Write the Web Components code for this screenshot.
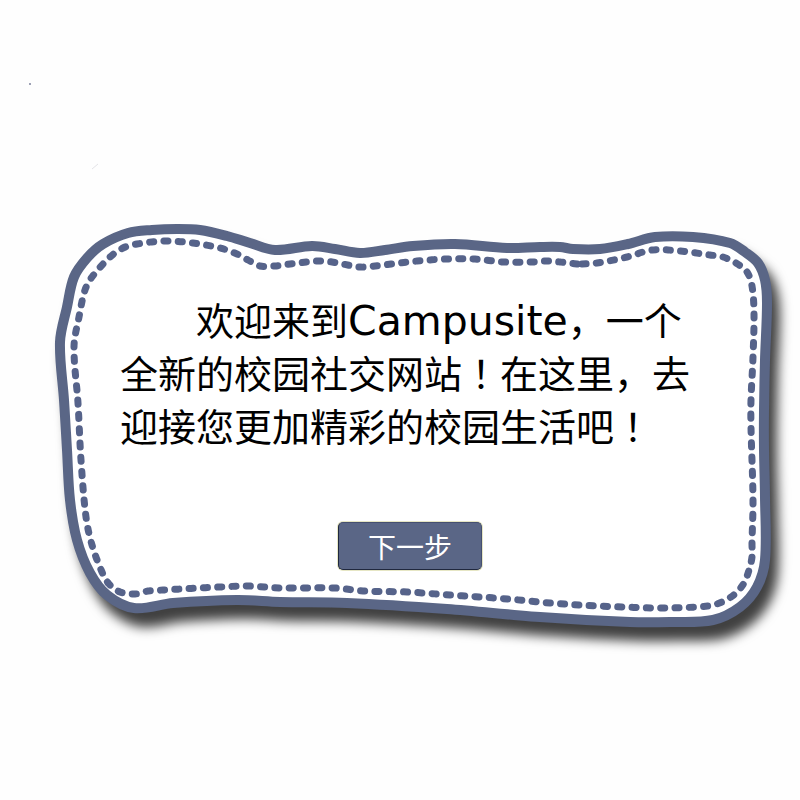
<!DOCTYPE html>
<html lang="zh-CN">
<head>
<meta charset="utf-8">
<meta name="viewport" content="width=device-width, initial-scale=1">
<title>Campusite</title>
<style>
  body { margin: 0; background: #fefefe; font-family: "Noto Sans CJK SC", sans-serif; }
</style>
</head>
<body>
<welcome-page>
  <stitched-card>
    <welcome-text>欢迎来到<latin-name>Campusite</latin-name>，一个全新的校园社交网站<centred-mark>！</centred-mark>在这里，去迎接您更加精彩的校园生活吧<centred-mark>！</centred-mark></welcome-text>
    <next-button slot="action">下一步</next-button>
  </stitched-card>
</welcome-page>
<script>
// Smooth curve through a list of points, as cubic Béziers.
function smooth(points, closed) {
  const n = points.length;
  const at = i => closed ? points[(i + n) % n] : points[Math.max(0, Math.min(n - 1, i))];
  const gap = (p, q) => Math.hypot(q[0] - p[0], q[1] - p[1]);
  let d = `M${points[0]}`;
  for (let i = 0; i < (closed ? n : n - 1); i++) {
    const [a, b, c, e] = [at(i - 1), at(i), at(i + 1), at(i + 2)];
    const t = gap(b, c) / gap(a, c) / 3;
    const u = gap(b, c) / gap(b, e) / 3;
    d += `C${b[0] + (c[0] - a[0]) * t},${b[1] + (c[1] - a[1]) * t} ${c[0] - (e[0] - b[0]) * u},${c[1] - (e[1] - b[1]) * u} ${c}`;
  }
  return closed ? d + "Z" : d;
}

const OUTLINE = [[128,233],[152,230],[177,229],[200,230],[227,236],[250,243],[275,250],[312,246],[335,249],[360,253],
  [385,250],[413,246],[455,244],[507,248],[540,247],[560,247],[573,249],[600,249],[628,244],[655,237],[693,237],[730,243],[745,252],
  [758,263],[765,280],[767,303],[765,360],[764,410],[764,450],[765,497],[765,560],[757,587],[740,607],[713,620],[670,622],
  [630,622],[540,617],[447,609],[347,603],[280,602],[237,600],[173,603],[134,608],[107,595],[90,573],[77,540],[70,500],
  [67,450],[64,400],[60,342],[67,307],[74,277],[87,258],[103,244]];

const STITCH = [[582,264],[597,263],[627,257],[652,250],[680,251],[710,255],[723,257],[736,263],[747,272],[752,286],[754,313],
  [753,357],[751,400],[751,427],[753,500],[752,543],[752,557],[749,570],[744,583],[735,594],[722,602],[708,606],[665,608],
  [623,607],[579,605],[550,603],[508,599],[450,595],[407,592],[363,591],[335,588],[280,588],[248,586],[220,587],[163,590],
  [148,591],[135,594],[120,592],[109,584],[102,572],[92,545],[86,517],[81,460],[78,403],[74,347],[79,317],[85,290],[92,277],
  [110,257],[123,248],[137,244],[165,241],[193,243],[220,248],[237,254],[248,260],[260,266],[275,266],[290,264],[318,261],
  [332,262],[360,267],[375,266],[417,261],[447,259],[475,259],[503,262],[532,262],[547,261],[560,262],[577,264]];

customElements.define("welcome-page", class extends HTMLElement {
  constructor() {
    super();
    this.attachShadow({ mode: "open" }).innerHTML = `
      <style>
        :host { display: block; position: relative; box-sizing: border-box; min-height: 100vh; padding: 224px 28px 64px 56px; }
        svg { position: absolute; top: 80px; left: 28px; }
      </style>
      <svg width="72" height="96" aria-hidden="true">
        <circle cx="2" cy="4" r="1" fill="#7d829c"/>
        <path d="M64 89l6-5" stroke="#e4e4e8" fill="none"/>
      </svg>
      <slot></slot>`;
  }
});

customElements.define("stitched-card", class extends HTMLElement {
  constructor() {
    super();
    this.attachShadow({ mode: "open" }).innerHTML = `
      <style>
        :host { display: flex; flex-direction: column; align-items: center; gap: 71px; position: relative;
          box-sizing: border-box; padding: 68px 72px 58px 64px; }
        svg { position: absolute; inset: 0; width: 100%; height: 100%; overflow: visible; z-index: -1; fill: none; }
        .edge { fill: #fff; stroke: #5a6686; stroke-width: 10; stroke-linejoin: round;
          filter: drop-shadow(8px 14px 6px rgba(0, 0, 0, .75)); }
        .stitch { stroke: #56638a; stroke-width: 7; stroke-linecap: round; stroke-dasharray: 4 10; }
      </style>
      <svg viewBox="56 224 716 404" preserveAspectRatio="none" aria-hidden="true">
        <path class="edge" d="${smooth(OUTLINE, true)}"/>
        <path class="stitch" d="${smooth(STITCH, false)}"/>
      </svg>
      <slot></slot>
      <slot name="action"></slot>`;
    // A whole number of stitches, so that the seam ends on a full one.
    const stitch = this.shadowRoot.querySelector(".stitch");
    const count = Math.round(stitch.getTotalLength() / 14.35);
    stitch.setAttribute("pathLength", count * 14 + 4);
  }
});

customElements.define("welcome-text", class extends HTMLElement {
  constructor() {
    super();
    this.attachShadow({ mode: "open" }).innerHTML = `
      <style>
        :host { display: block; width: 100%; color: #000; }
        p { margin: 0; font-size: 38px; line-height: 53px; text-indent: 2em; }
      </style>
      <p><slot></slot></p>`;
  }
});

// Inline elements: no white space in the shadow root, since it would be drawn as a gap in the line.
customElements.define("latin-name", class extends HTMLElement {
  constructor() {
    super();
    this.attachShadow({ mode: "open" }).innerHTML =
      `<style>:host { display: inline; font: 41px/1 "DejaVu Sans", sans-serif; }</style><slot></slot>`;
  }
});

customElements.define("centred-mark", class extends HTMLElement {
  constructor() {
    super();
    this.attachShadow({ mode: "open" }).innerHTML =
      `<style>:host { display: inline; font-family: "Noto Sans CJK TC", sans-serif; }</style><slot></slot>`;
    this.lang = "zh-TW";
  }
});

customElements.define("next-button", class extends HTMLElement {
  constructor() {
    super();
    this.attachShadow({ mode: "open" }).innerHTML = `
      <style>
        :host { display: block; }
        button { display: block; box-sizing: border-box; padding: 0 29px; border: 1px solid #465070;
          border-left-color: #20283e; border-bottom-color: #20283e; border-radius: 5px; background: #5a6686;
          box-shadow: 0 0 0 1px #e6e6c4; color: #fff; font-family: inherit; font-size: 28px; line-height: 46px; cursor: pointer; }
      </style>
      <button type="button"><slot></slot></button>`;
  }
});
</script>
</body>
</html>
